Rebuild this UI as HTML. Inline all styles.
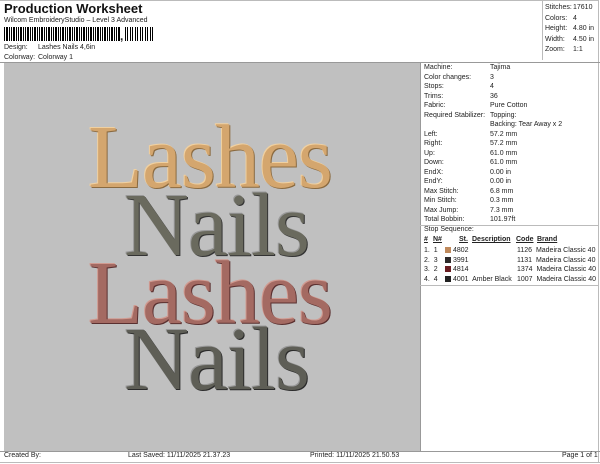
<!DOCTYPE html>
<html><head><style>
body{margin:0;width:600px;height:464px;background:#fff;font-family:"Liberation Sans",sans-serif;font-size:7px;color:#222;position:relative;overflow:hidden}
.a{position:absolute;white-space:nowrap}
.bc{position:absolute;left:4px;top:27px;width:116px;height:14px;background:repeating-linear-gradient(90deg,#000 0 1px,#fff 1px 2px,#000 2px 4px,#fff 4px 5px,#000 5px 6px,#fff 6px 7px)}
.bc2{position:absolute;left:125px;top:27px;width:28px;height:14px;background:repeating-linear-gradient(90deg,#000 0 1px,#fff 1px 2px,#000 2px 3px,#fff 3px 5px)}
.d{position:absolute;font-family:"Liberation Serif",serif;font-size:90px;line-height:1;letter-spacing:-1px}
</style></head><body>
<div class="a" style="left:4px;top:1px;font-size:13px;font-weight:bold;color:#111">Production Worksheet</div>
<div class="a" style="left:4px;top:17px">Wilcom EmbroideryStudio – Level 3 Advanced</div>
<div class="bc"></div><div class="a" style="left:120px;top:29px;font-size:12px;font-weight:bold">,</div><div class="bc2"></div>
<div class="a" style="left:4px;top:44px">Design:</div><div class="a" style="left:38px;top:44px">Lashes Nails 4,6in</div>
<div class="a" style="left:4px;top:54px">Colorway:</div><div class="a" style="left:38px;top:54px">Colorway 1</div>
<div class="a" style="left:0;top:0;width:598px;height:0;border-top:1px solid #bbb"></div>
<div class="a" style="left:598px;top:0;height:462px;border-left:1px solid #bbb"></div>
<div class="a" style="left:542px;top:0;height:60px;border-left:1px solid #bbb"></div>
<div class="a" style="left:0;top:62px;width:600px;border-top:1px solid #999"></div>
<div class="a" style="left:545px;top:3px;line-height:10.6px">Stitches:<br>Colors:<br>Height:<br>Width:<br>Zoom:</div>
<div class="a" style="left:573px;top:3px;line-height:10.6px">17610<br>4<br>4.80 in<br>4.50 in<br>1:1</div>
<div class="a" style="left:4px;top:63px;width:416px;height:388px;background:#c0c0c0"></div>
<div class="a" style="left:420px;top:62px;height:390px;border-left:1px solid #999"></div>
<div class="d" style="left:88px;top:113px;color:#d4a66e;text-shadow:1px 1px 0 #8a6a40,-1px -1px 0 #f0d0a0">Lashes</div>
<div class="d" style="left:124px;top:181px;color:#6a6a5e;text-shadow:1px 1px 0 #333,-1px -1px 0 #999">Nails</div>
<div class="d" style="left:88px;top:249px;color:#a46a62;text-shadow:1px 1px 0 #5a3030,-1px -1px 0 #d09a90">Lashes</div>
<div class="d" style="left:124px;top:315px;color:#5e5e56;text-shadow:1px 1px 0 #2a2a2a,-1px -1px 0 #999">Nails</div>
<div class="a" style="left:424px;top:63px;line-height:9.5px">Machine:<br>Color changes:<br>Stops:<br>Trims:<br>Fabric:<br>Required Stabilizer:<br>&nbsp;<br>Left:<br>Right:<br>Up:<br>Down:<br>EndX:<br>EndY:<br>Max Stitch:<br>Min Stitch:<br>Max Jump:<br>Total Bobbin:</div>
<div class="a" style="left:490px;top:63px;line-height:9.5px">Tajima<br>3<br>4<br>36<br>Pure Cotton<br>Topping:<br>Backing: Tear Away x 2<br>57.2 mm<br>57.2 mm<br>61.0 mm<br>61.0 mm<br>0.00 in<br>0.00 in<br>6.8 mm<br>0.3 mm<br>7.3 mm<br>101.97ft</div>
<div class="a" style="left:420px;top:225px;width:178px;border-top:1px solid #bbb"></div>
<div class="a" style="left:424px;top:226px">Stop Sequence:</div>
<div class="a" style="left:424px;top:236px;font-weight:bold;text-decoration:underline">#</div>
<div class="a" style="left:433px;top:236px;font-weight:bold;text-decoration:underline">N#</div>
<div class="a" style="left:459px;top:236px;font-weight:bold;text-decoration:underline">St.</div>
<div class="a" style="left:472px;top:236px;font-weight:bold;text-decoration:underline">Description</div>
<div class="a" style="left:516px;top:236px;font-weight:bold;text-decoration:underline">Code</div>
<div class="a" style="left:537px;top:236px;font-weight:bold;text-decoration:underline">Brand</div>
<div class="a" style="left:424px;top:246px;line-height:9.7px">1.&nbsp; 1<br>2.&nbsp; 3<br>3.&nbsp; 2<br>4.&nbsp; 4</div>
<div class="a" style="left:445px;top:247px;width:6px;height:6px;background:#c08a5c"></div>
<div class="a" style="left:445px;top:256.5px;width:6px;height:6px;background:#2e2a2a"></div>
<div class="a" style="left:445px;top:266px;width:6px;height:6px;background:#6a1e22"></div>
<div class="a" style="left:445px;top:276px;width:6px;height:6px;background:#222"></div>
<div class="a" style="left:453px;top:246px;line-height:9.7px">4802<br>3991<br>4814<br>4001&nbsp; Amber Black</div>
<div class="a" style="left:517px;top:246px;line-height:9.7px">1126&nbsp; Madeira Classic 40<br>1131&nbsp; Madeira Classic 40<br>1374&nbsp; Madeira Classic 40<br>1007&nbsp; Madeira Classic 40</div>
<div class="a" style="left:420px;top:285px;width:178px;border-top:1px solid #bbb"></div>
<div class="a" style="left:0;top:451px;width:600px;border-top:1px solid #999"></div>
<div class="a" style="left:0;top:462px;width:600px;border-top:1px solid #bbb"></div>
<div class="a" style="left:4px;top:452px">Created By:</div>
<div class="a" style="left:128px;top:452px">Last Saved: 11/11/2025 21.37.23</div>
<div class="a" style="left:310px;top:452px">Printed: 11/11/2025 21.50.53</div>
<div class="a" style="left:562px;top:452px">Page 1 of 1</div>
</body></html>
